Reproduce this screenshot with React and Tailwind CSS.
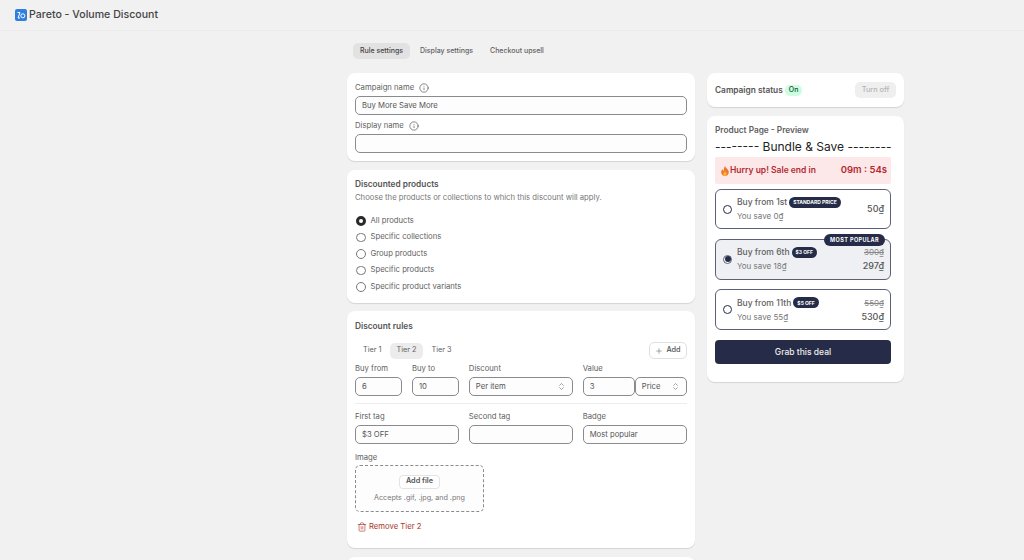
import { ChevronsUpDown, Info, Plus, Trash2 } from "lucide-react";

const inputClass =
  "flex h-[19px] w-full items-center rounded-[5px] border border-[#8a8a8f] bg-[#fdfdfd] px-[6px] text-[7.7px] text-[#555]";

const Field = ({ label, value }) => (
  <div>
    <div className="mb-[2px] text-[7.7px] leading-[12px] text-[#616161]">{label}</div>
    <div className={inputClass}>{value}</div>
  </div>
);

const Select = ({ value, className = "" }) => (
  <div className={`${inputClass} justify-between ${className}`}>
    {value}
    <ChevronsUpDown size={9} strokeWidth={1.5} className="text-[#666]" />
  </div>
);

const Radio = ({ label, checked }) => (
  <div className="flex h-[16.5px] items-center gap-[5px] text-[7.7px] text-[#616161]">
    {checked ? (
      <span className="h-[9.5px] w-[9.5px] rounded-full border-[3px] border-[#2a2a2a] bg-white" />
    ) : (
      <span className="h-[9.5px] w-[9.5px] rounded-full border border-[#777] bg-white" />
    )}
    {label}
  </div>
);

const Card = ({ className = "", children }) => (
  <div className={`rounded-[8px] bg-white shadow-[0_1px_1px_rgba(0,0,0,0.12)] ${className}`}>{children}</div>
);

const Tag = ({ children, className = "" }) => (
  <span className={`rounded-full bg-[#262c47] font-bold leading-[10px] text-white ${className}`}>{children}</span>
);

const Tier = ({ title, tag, save, oldPrice, price, selected, badge, className }) => (
  <div
    className={`relative flex items-center rounded-[6px] border border-[#5b6078] pl-[7px] pr-[6px] ${className} ${
      selected ? "bg-[#eef0f3]" : "bg-white"
    }`}
  >
    {badge && (
      <Tag className="absolute right-[5px] top-[-6px] px-[6px] py-[1px] text-[5.5px] tracking-[0.4px]">{badge}</Tag>
    )}
    {selected ? (
      <span className="flex h-[9px] w-[9px] items-center justify-center rounded-full border border-[#5b6078] bg-white">
        <span className="h-[6px] w-[6px] rounded-full bg-[#262c47]" />
      </span>
    ) : (
      <span className="h-[9px] w-[9px] rounded-full border border-[#262c47] bg-white" />
    )}
    <div className="ml-[5px]">
      <div className="flex items-center gap-[2px] text-[8.5px] font-medium leading-[12px] text-[#616161]">
        {title}
        <Tag className="px-[4px] py-[0.5px] text-[5px]">{tag}</Tag>
      </div>
      <div className="mt-[2px] text-[8px] leading-[12px] text-[#777]">{save}</div>
    </div>
    <div className="ml-auto text-right">
      {oldPrice && <div className="text-[8px] leading-[12px] text-[#888] line-through">{oldPrice}</div>}
      <div className={`text-[9px] font-medium leading-[12px] text-[#555] ${oldPrice ? "mt-[2px]" : ""}`}>{price}</div>
    </div>
  </div>
);

export default function App() {
  return (
    <div className="h-[560px] overflow-hidden bg-[#f1f1f1] font-['Inter',sans-serif]">
      <header className="flex h-[31px] items-center gap-[2px] border-b border-[#ebebeb] pl-[15px]">
        <svg width="12" height="12" viewBox="0 0 12 12">
          <rect width="12" height="12" rx="2" fill="#2f7fe0" />
          <circle cx="7.8" cy="6.8" r="2" fill="none" stroke="#fff" strokeWidth="1" />
          <path d="M2.500 3.500h2.500L3 9h2" fill="none" stroke="#fff" strokeWidth="1" />
        </svg>
        <span className="text-[10.6px] font-medium text-[#444]">Pareto - Volume Discount</span>
      </header>

      <main className="ml-[347px] w-[557px]">
        <nav className="mb-[2px] ml-[6px] flex h-[40px] items-center gap-[3px] text-[7px] font-medium text-[#616161]">
          <span className="rounded-[5px] bg-[#e2e2e2] px-[7px] py-[4px] leading-[8px] text-[#444]">Rule settings</span>
          <span className="px-[7px] py-[4px] leading-[8px]">Display settings</span>
          <span className="px-[7px] py-[4px] leading-[8px]">Checkout upsell</span>
        </nav>

        <div className="flex items-start gap-[12px]">
          <div className="flex w-[348px] flex-col gap-[8.5px]">
            <Card className="h-[88px] px-[8px] pt-[9px]">
              <div className="mb-[2px] flex items-center gap-[5px] text-[7.7px] leading-[12px] text-[#616161]">
                Campaign name <Info size={10} strokeWidth={1.5} className="text-[#444]" />
              </div>
              <div className={inputClass}>Buy More Save More</div>
              <div className="mb-[2px] mt-[5px] flex items-center gap-[5px] text-[7.7px] leading-[12px] text-[#616161]">
                Display name <Info size={10} strokeWidth={1.5} className="text-[#444]" />
              </div>
              <div className={inputClass} />
            </Card>

            <Card className="h-[133px] px-[8px] pt-[8px]">
              <div className="text-[8.3px] font-semibold leading-[12px] text-[#555]">Discounted products</div>
              <div className="mt-[2px] text-[7.7px] leading-[12px] text-[#777]">
                Choose the products or collections to which this discount will apply.
              </div>
              <div className="ml-[1px] mt-[9px]">
                <Radio label="All products" checked />
                <Radio label="Specific collections" />
                <Radio label="Group products" />
                <Radio label="Specific products" />
                <Radio label="Specific product variants" />
              </div>
            </Card>

            <Card className="h-[237px] px-[8px] pt-[9px]">
              <div className="text-[8.3px] font-semibold leading-[12px] text-[#555]">Discount rules</div>
              <div className="mt-[10px] flex items-center justify-between">
                <div className="flex text-[7.3px] text-[#616161]">
                  <span className="flex h-[16px] items-center px-[8px]">Tier 1</span>
                  <span className="flex h-[16px] items-center rounded-[5px] bg-[#ececec] px-[7px]">Tier 2</span>
                  <span className="flex h-[16px] items-center px-[8px]">Tier 3</span>
                </div>
                <div className="flex h-[17px] w-[38px] items-center justify-center gap-[3px] rounded-[5px] border border-[#e0e0e0] text-[7.3px] font-medium text-[#555]">
                  <Plus size={8} strokeWidth={1.5} /> Add
                </div>
              </div>
              <div className="mt-[4px] grid grid-cols-3 gap-[9.5px]">
                <div className="grid grid-cols-2 gap-[9.5px]">
                  <Field label="Buy from" value="6" />
                  <Field label="Buy to" value="10" />
                </div>
                <div>
                  <div className="mb-[2px] text-[7.7px] leading-[12px] text-[#616161]">Discount</div>
                  <Select value="Per item" />
                </div>
                <div>
                  <div className="mb-[2px] text-[7.7px] leading-[12px] text-[#616161]">Value</div>
                  <div className="grid grid-cols-2">
                    <div className={inputClass}>3</div>
                    <Select value="Price" />
                  </div>
                </div>
              </div>
              <div className="mb-[7px] mt-[7px] h-px bg-[#ededed]" />
              <div className="grid grid-cols-3 gap-[9.5px]">
                <Field label="First tag" value="$3 OFF" />
                <Field label="Second tag" value="" />
                <Field label="Badge" value="Most popular" />
              </div>
              <div className="mb-[1px] mt-[8px] text-[7.7px] leading-[12px] text-[#616161]">Image</div>
              <div className="flex h-[47px] w-[129px] flex-col items-center justify-center rounded-[5px] border border-dashed border-[#8a8a8f] bg-[#fdfdfd]">
                <div className="flex h-[14px] w-[41px] items-center justify-center rounded-[4px] border border-[#e3e3e3] bg-white text-[7.3px] font-semibold text-[#555]">
                  Add file
                </div>
                <div className="mt-[4px] text-[7.2px] leading-[10px] text-[#777]">Accepts .gif, .jpg, and .png</div>
              </div>
              <div className="ml-[2px] mt-[10px] flex items-center gap-[2px] text-[7.7px] leading-[10px] text-[#a8362c]">
                <Trash2 size={10} strokeWidth={1.5} />
                Remove Tier 2
              </div>
            </Card>

            <Card className="h-[40px]" />
          </div>

          <div className="flex w-[197px] flex-col gap-[9px]">
            <Card className="flex h-[34px] items-center px-[8px]">
              <span className="text-[8.3px] font-semibold text-[#555]">Campaign status</span>
              <span className="ml-[2px] flex h-[11px] items-center rounded-[5px] bg-[#cdfee1] px-[4px] text-[7px] font-medium text-[#0c5132]">
                On
              </span>
              <span className="ml-auto flex h-[16px] w-[41px] items-center justify-center rounded-[5px] bg-[#efefef] text-[7.3px] font-medium text-[#b5b5b5]">
                Turn off
              </span>
            </Card>

            <Card className="h-[266px] pl-[8px] pr-[13px] pt-[8px]">
              <div className="text-[8.3px] font-semibold leading-[12px] text-[#616161]">Product Page - Preview</div>
              <div className="mt-[3px] whitespace-nowrap text-center text-[12px] leading-[15px] text-[#222]">
                -------- Bundle &amp; Save --------
              </div>
              <div className="mt-[3px] flex h-[27px] items-center justify-between rounded-[2px] bg-[#fde8e9] pl-[6px] pr-[4px] font-semibold text-[#b42831]">
                <span className="flex items-center gap-[1px] text-[8.5px]">
                  <svg width="8" height="10" viewBox="0 0 8 10">
                    <path d="M4 0c.5 2 3.800 3.400 3.800 6.200C7.800 8.400 6.100 10 4 10S.2 8.400.2 6.300C.2 5 .9 4 1.700 3.300c.1 1 .5 1.500 1 1.700C2.600 3.300 3 1.500 4 0z" fill="#f0762b" />
                    <path d="M4 5c.3 1 1.800 1.500 1.800 3C5.800 9.200 5 10 4 10s-1.800-.8-1.800-2C2.200 6.800 3.500 6 4 5z" fill="#fbb03b" />
                  </svg>
                  Hurry up! Sale end in
                </span>
                <span className="text-[9.5px]">09m : 54s</span>
              </div>
              <div className="mt-[5px] flex flex-col gap-[9.5px]">
                <Tier className="h-[40px]" title="Buy from 1st" tag="STANDARD PRICE" save="You save 0₫" price="50₫" />
                <Tier
                  className="h-[41px]"
                  selected
                  badge="MOST POPULAR"
                  title="Buy from 6th"
                  tag="$3 OFF"
                  save="You save 18₫"
                  oldPrice="300₫"
                  price="297₫"
                />
                <Tier
                  className="h-[41px]"
                  title="Buy from 11th"
                  tag="$5 OFF"
                  save="You save 55₫"
                  oldPrice="550₫"
                  price="530₫"
                />
              </div>
              <div className="mt-[10px] flex h-[24px] items-center justify-center rounded-[4px] bg-[#262c47] text-[8.5px] font-medium text-[#eee]">
                Grab this deal
              </div>
            </Card>
          </div>
        </div>
      </main>
    </div>
  );
}
